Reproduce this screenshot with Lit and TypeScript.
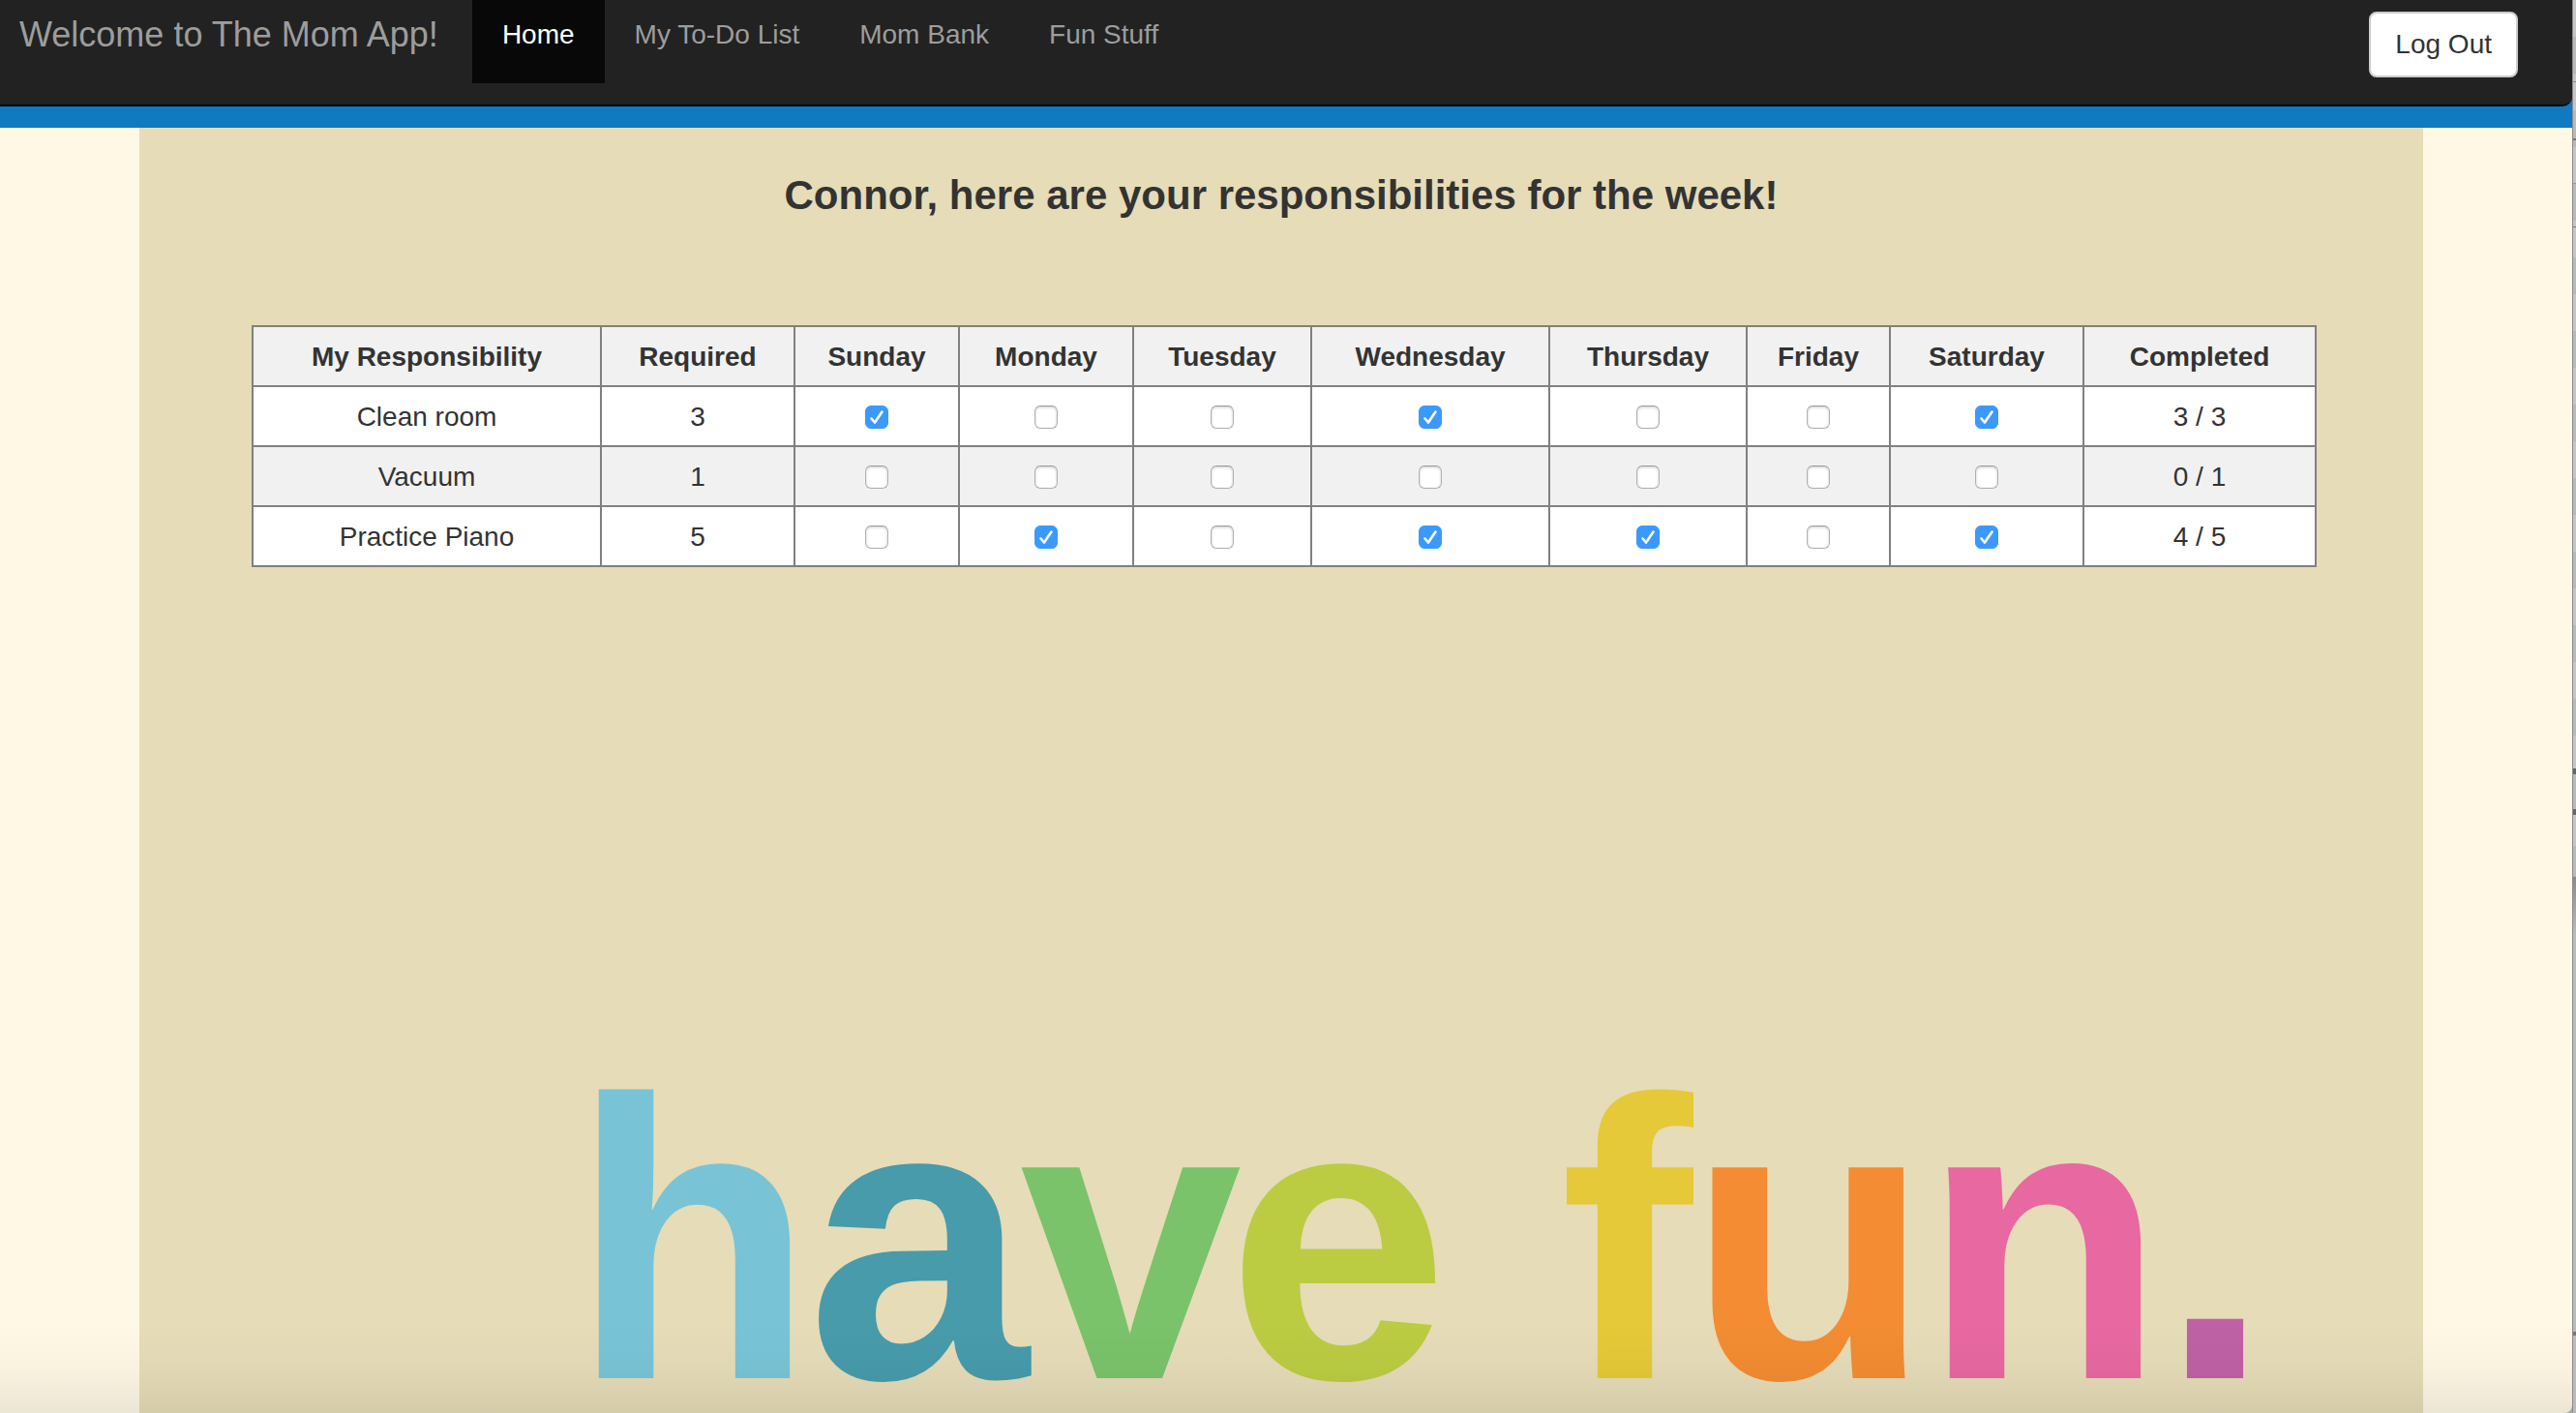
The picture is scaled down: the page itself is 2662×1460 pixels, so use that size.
import { LitElement, html, css, svg } from "lit";
import { customElement, state } from "lit/decorators.js";

interface Chore {
  name: string;
  required: number;
  days: boolean[];
}

const DAYS = ["Sunday", "Monday", "Tuesday", "Wednesday", "Thursday", "Friday", "Saturday"];
const COLUMN_WIDTHS = [360, 200, 170, 180, 184, 246, 204, 148, 200, 240];
const LINKS = ["Home", "My To-Do List", "Mom Bank", "Fun Stuff"];

const LETTERS: Array<[string, number, string]> = [
  ["h", 590, "#78c4d6"],
  ["a", 834, "#479bab"],
  ["v", 1054, "#7ac36a"],
  ["e", 1268, "#bbcc42"],
  [" ", 1490, "none"],
  ["f", 1612, "#e5c938"],
  ["u", 1744, "#f38c32"],
  ["n", 1986, "#e868a2"],
  [".", 2232, "#bf61a5"],
];

@customElement("app-root")
export class AppRoot extends LitElement {
  @state() private chores: Chore[] = [
    { name: "Clean room", required: 3, days: [true, false, false, true, false, false, true] },
    { name: "Vacuum", required: 1, days: [false, false, false, false, false, false, false] },
    { name: "Practice Piano", required: 5, days: [false, true, false, true, true, false, true] },
  ];

  static styles = css`
    :host {
      display: grid;
      grid-template-columns: 1fr 4px;
      position: relative;
      min-height: 100vh;
      overflow: hidden;
      background: #aaa;
      color: #333;
      font: 28px/40px "Liberation Sans", Arial, sans-serif;
    }
    * { box-sizing: border-box; }
    .window {
      display: flex;
      flex-direction: column;
      background: #fff8e5;
      border-bottom-right-radius: 8px;
    }
    .edge {
      border-left: 1px solid #8c8c8c;
      background:
        linear-gradient(#888, #888) 0 84px / 100% 1px no-repeat,
        linear-gradient(#777, #777) 0 143px / 100% 2px no-repeat,
        linear-gradient(#999, #999) 0 189px / 100% 1px no-repeat,
        linear-gradient(#777, #777) 0 234px / 100% 1px no-repeat,
        linear-gradient(#666, #666) 0 794px / 100% 6px no-repeat,
        linear-gradient(#666, #666) 0 836px / 100% 6px no-repeat,
        linear-gradient(#777, #777) 0 1376px / 100% 4px no-repeat,
        linear-gradient(#8a8a8a, #bbb 60px) 0 906px / 100% 554px no-repeat,
        repeating-linear-gradient(#c6c6c6 0 38px, #b9b9b9 38px 76px);
    }
    .top {
      background: #0f7ac0;
      padding-bottom: 22px;
    }
    .nav {
      display: flex;
      align-items: flex-start;
      height: 110px;
      background: #222;
      border-bottom: 2px solid #080808;
      border-bottom-right-radius: 10px;
      padding-right: 56px;
    }
    .brand, .link {
      padding: 16px 31px 30px;
      color: #9d9d9d;
      text-decoration: none;
      white-space: nowrap;
    }
    .brand {
      font-size: 36px;
      padding-left: 20px;
      padding-right: 35px;
    }
    .active {
      background: #080808;
      color: #fff;
    }
    .logout {
      margin: 12px 0 0 auto;
      height: 68px;
      padding: 0 25px;
      font: inherit;
      color: #333;
      background: #fff;
      border: 2px solid #ccc;
      border-radius: 8px;
    }
    .content {
      flex: 1;
      display: flex;
      flex-direction: column;
      margin: 0 154px 0 144px;
      padding-top: 46px;
      background: #e6dcb8;
    }
    .title {
      margin: 0;
      font-size: 42px;
      line-height: 48px;
      text-align: center;
    }
    .table-area {
      padding: 110px 110px 0 116px;
    }
    .chores {
      width: 100%;
      table-layout: fixed;
      border-collapse: collapse;
      text-align: center;
    }
    .chores th, .chores td {
      height: 62px;
      padding: 2px 0 0;
      border: 2px solid #808080;
    }
    .head, .rows tr:nth-child(even) { background: #f1f1f1; }
    .rows tr:nth-child(odd) { background: #fff; }
    .tick {
      display: grid;
      justify-content: center;
    }
    .box, .mark {
      grid-area: 1 / 1;
      width: 24px;
      height: 24px;
    }
    .box {
      appearance: none;
      margin: 0;
      border: 1px solid #b0b0b0;
      border-top-color: #999;
      border-radius: 6px;
      background: #fff;
      box-shadow: inset 0 1px 3px #0003;
    }
    .box:checked {
      border-color: #3b99fc;
      background: #3b99fc;
      box-shadow: none;
    }
    .mark {
      visibility: hidden;
      pointer-events: none;
      fill: none;
      stroke: #fff;
      stroke-width: 2.6;
      stroke-linecap: round;
      stroke-linejoin: round;
    }
    .box:checked + .mark { visibility: visible; }
    .art {
      display: block;
      width: 100%;
      margin-top: auto;
      overflow: visible;
      font-size: 412px;
      font-weight: bold;
    }
    .shade {
      position: absolute;
      inset: auto 4px 0 0;
      height: 92px;
      border-bottom-right-radius: 8px;
      background: linear-gradient(#0000, #00000006 50%, #00000013);
      pointer-events: none;
    }
  `;

  private toggle(row: number, day: number) {
    this.chores = this.chores.map((c, i) =>
      i === row ? { ...c, days: c.days.map((d, j) => (j === day ? !d : d)) } : c,
    );
  }

  private renderRow(chore: Chore, row: number) {
    return html`<tr>
      <td>${chore.name}</td>
      <td>${chore.required}</td>
      ${chore.days.map(
        (done, day) => html`<td>
          <label class="tick">
            <input
              class="box"
              type="checkbox"
              aria-label="${chore.name}, ${DAYS[day]}"
              .checked=${done}
              @change=${() => this.toggle(row, day)}
            />
            <svg class="mark" viewBox="0 0 24 24" aria-hidden="true"><path d="M6.5 13.5 10 17.5 17.5 6.5" /></svg>
          </label>
        </td>`,
      )}
      <td>${chore.days.filter(Boolean).length} / ${chore.required}</td>
    </tr>`;
  }

  render() {
    return html`
      <div class="window">
        <header class="top">
          <nav class="nav">
            <a class="brand" href="#">Welcome to The Mom App!</a>
            ${LINKS.map((l, i) => html`<a class="link ${i === 0 ? "active" : ""}" href="#">${l}</a>`)}
            <button class="logout" type="button">Log Out</button>
          </nav>
        </header>
        <main class="content">
          <h1 class="title">Connor, here are your responsibilities for the week!</h1>
          <div class="table-area">
            <table class="chores">
              <colgroup>
                ${COLUMN_WIDTHS.map((w) => html`<col style="width:${w / 21.32}%" />`)}
              </colgroup>
              <thead>
                <tr class="head">
                  ${["My Responsibility", "Required", ...DAYS, "Completed"].map((h) => html`<th scope="col">${h}</th>`)}
                </tr>
              </thead>
              <tbody class="rows">
                ${this.chores.map((c, i) => this.renderRow(c, i))}
              </tbody>
            </table>
          </div>
          <svg class="art" viewBox="144 1040 2360 420">
            <text y="1424">${LETTERS.map(([ch, x, fill]) => svg`<tspan x=${x} fill=${fill}>${ch}</tspan>`)}</text>
          </svg>
        </main>
      </div>
      <div class="edge"></div>
      <div class="shade"></div>
    `;
  }
}
